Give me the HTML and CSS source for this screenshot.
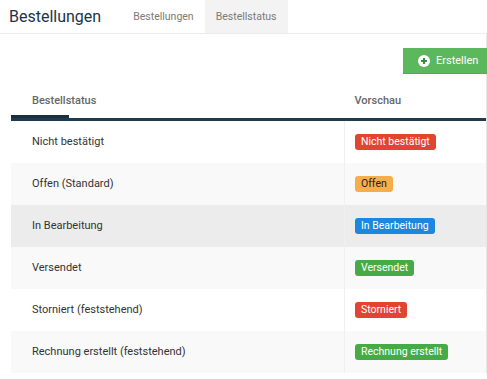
FILE: index.html
```html
<!DOCTYPE html>
<html lang="de">
<head>
    <meta charset="UTF-8">
    <meta name="viewport" content="width=device-width, initial-scale=1.0">
    <title>Bestellstatus</title>
    <link rel="stylesheet" href="styles.css">
</head>
<body>
    <div class="topbar">
        <h1>Bestellungen</h1>
        <a class="tab" href="#">Bestellungen</a>
        <a class="tab active" href="#">Bestellstatus</a>
    </div>

    <div class="panel">
        <div class="toolbar">
            <button type="button" class="create">
                <svg width="12" height="12" viewBox="0 0 12 12">
                    <circle cx="6" cy="6" r="6" fill="#fff"/>
                    <path d="M6 3v6M3 6h6" stroke="#3d8b3d" stroke-width="2"/>
                </svg>
                Erstellen
            </button>
        </div>

        <table class="status-table">
            <thead>
                <tr>
                    <th>Bestellstatus</th>
                    <th class="preview">Vorschau</th>
                </tr>
            </thead>
            <tbody>
                <tr>
                    <td>Nicht bestätigt</td>
                    <td class="preview"><span class="badge red">Nicht bestätigt</span></td>
                </tr>
                <tr>
                    <td>Offen (Standard)</td>
                    <td class="preview"><span class="badge orange">Offen</span></td>
                </tr>
                <tr class="hover">
                    <td>In Bearbeitung</td>
                    <td class="preview"><span class="badge blue">In Bearbeitung</span></td>
                </tr>
                <tr>
                    <td>Versendet</td>
                    <td class="preview"><span class="badge green">Versendet</span></td>
                </tr>
                <tr>
                    <td>Storniert (feststehend)</td>
                    <td class="preview"><span class="badge red">Storniert</span></td>
                </tr>
                <tr>
                    <td>Rechnung erstellt (feststehend)</td>
                    <td class="preview"><span class="badge green">Rechnung erstellt</span></td>
                </tr>
            </tbody>
        </table>
    </div>
</body>
</html>
```

FILE: styles.css
```css
body {
    font-family: Roboto, "Liberation Sans", sans-serif;
    background-color: #fff;
    margin: 0;
    padding: 0;
    color: #333;
}
.topbar {
    display: flex;
    height: 33px;
    border-bottom: 1px solid #ececec;
}
.topbar h1 {
    margin: 0 21px 0 9px;
    font-size: 16px;
    font-weight: 400;
    line-height: 33px;
    color: #1b3449;
}
.tab {
    padding: 0 11px;
    font-size: 10.5px;
    line-height: 33px;
    color: #7a7a7a;
    text-decoration: none;
}
.tab.active {
    background-color: #f3f3f3;
}
.panel {
    margin-left: 11px;
    border-right: 1px solid #e6e6e6;
}
.toolbar {
    display: flex;
    justify-content: flex-end;
    padding-top: 14px;
    margin-right: -1px;
}
.create {
    display: flex;
    align-items: center;
    gap: 6px;
    height: 26px;
    width: 84px;
    padding: 0 0 0 15px;
    border: none;
    border-bottom: 1px solid #4cae4c;
    background-color: #5cb85c;
    color: #fff;
    font-family: inherit;
    font-size: 11px;
    cursor: pointer;
}
.status-table {
    width: 100%;
    border-collapse: collapse;
    font-size: 11px;
}
.status-table th {
    height: 45px;
    padding: 9px 21px 0;
    box-sizing: border-box;
    text-align: left;
    font-weight: 500;
    color: #666;
    border-bottom: 3px solid #1f3b4f;
}
.status-table th:first-child {
    background: linear-gradient(#1a2f40, #1a2f40) no-repeat left bottom / 58px 3px;
}
.status-table td {
    height: 42px;
    padding: 0 21px;
    color: #333;
}
.status-table .preview {
    width: 131px;
    padding: 0 0 0 10px;
}
.status-table th.preview {
    padding-top: 9px;
}
.status-table td.preview {
    border-left: 1px solid #f0f0f0;
}
.status-table tbody tr:nth-child(even) {
    background-color: #f9f9f9;
}
.status-table tbody tr.hover {
    background-color: #ececec;
}
.badge {
    display: inline-block;
    padding: 0 6px;
    line-height: 16px;
    border-radius: 3px;
    color: #fff;
    font-size: 10.5px;
}
.badge.red {
    background-color: #e14532;
}
.badge.orange {
    background-color: #f6ae4b;
    color: #222;
}
.badge.blue {
    background-color: #1b87de;
}
.badge.green {
    background-color: #46ab46;
}
```
